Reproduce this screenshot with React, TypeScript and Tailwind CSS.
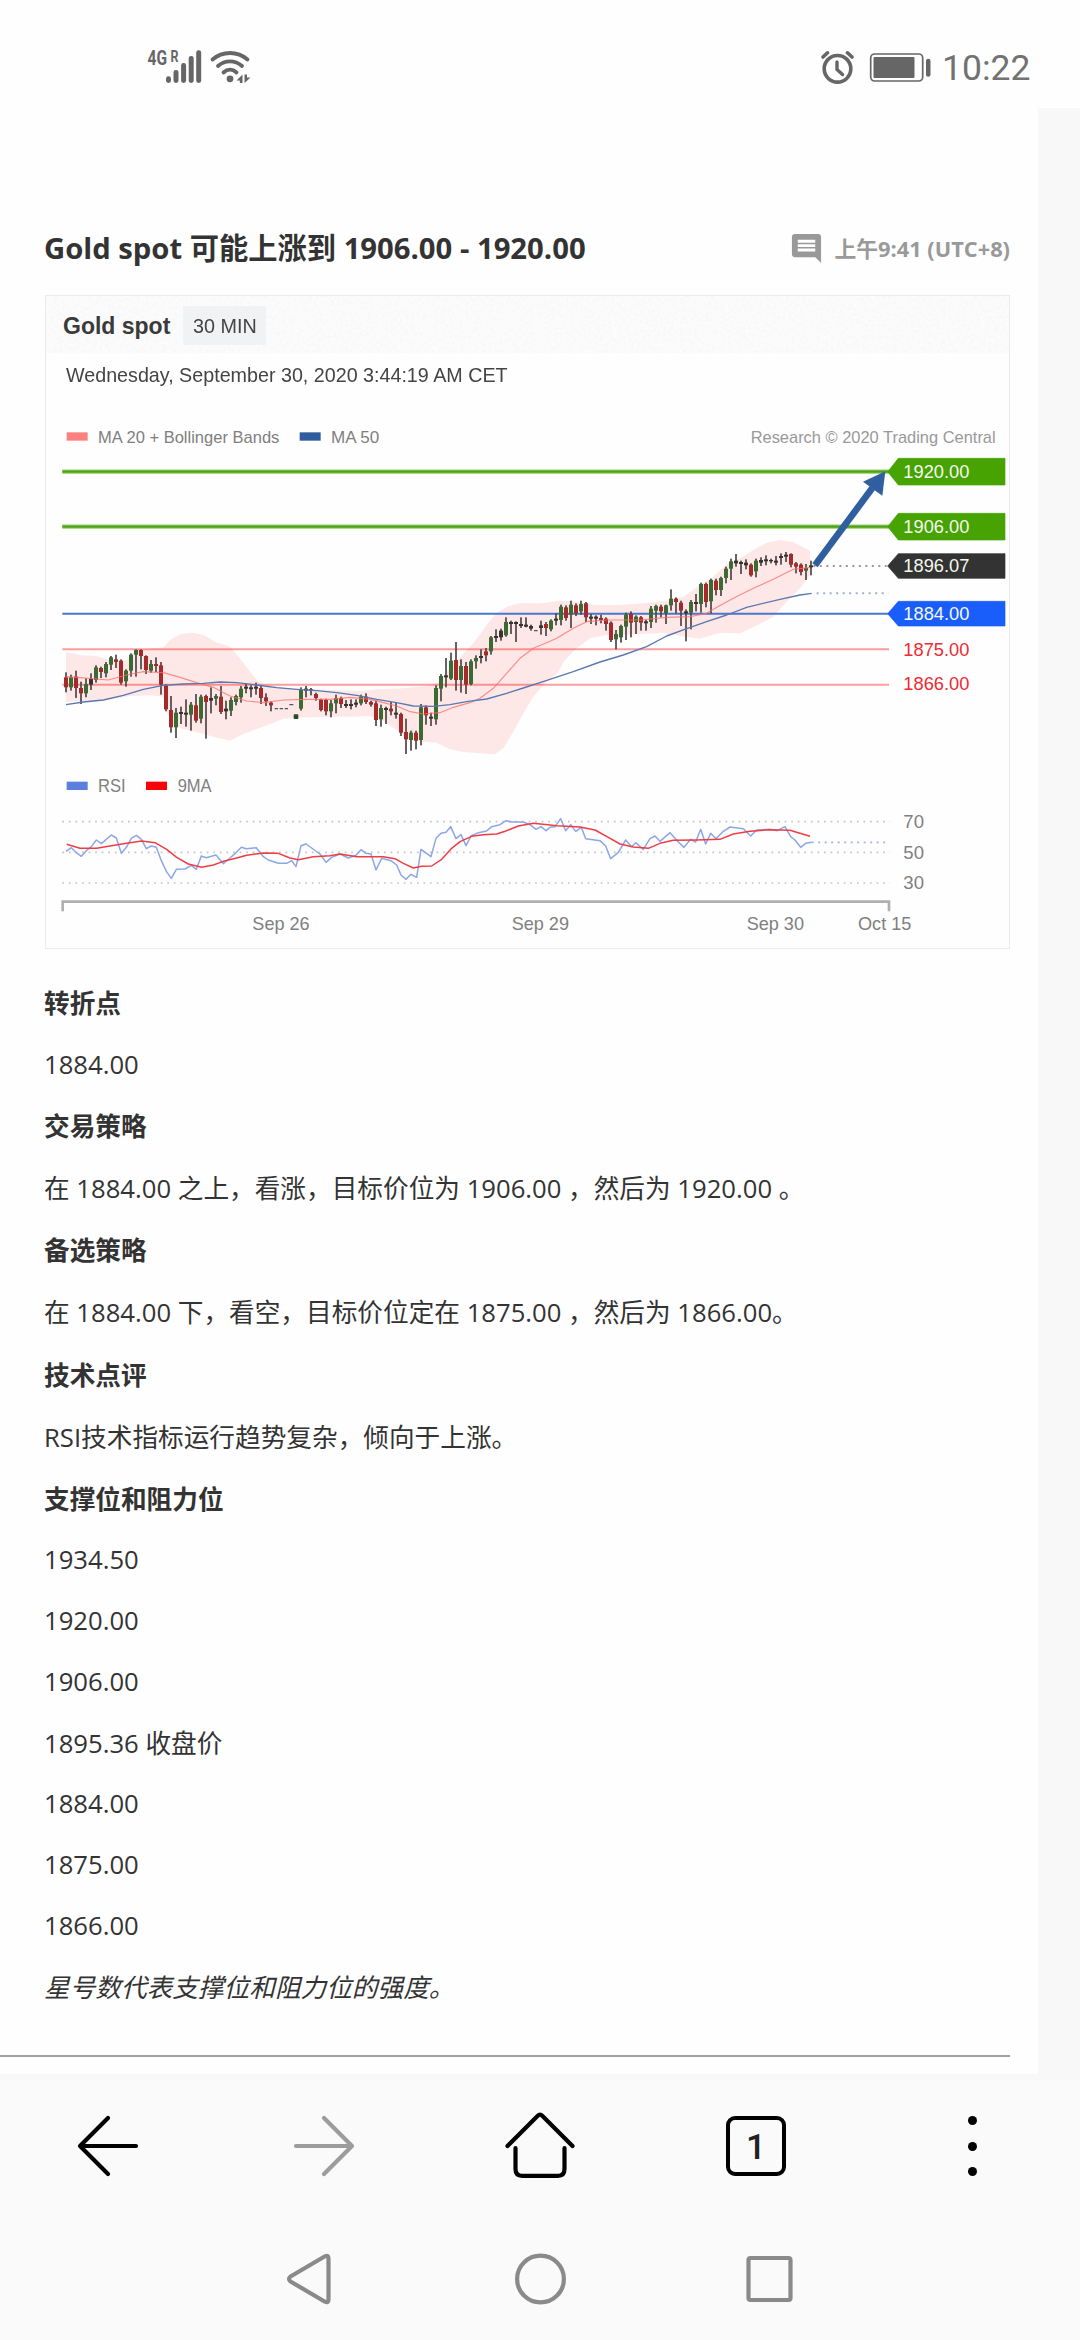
import { MdComment } from "react-icons/md"

type Candle = [high: number, top: number, bottom: number, low: number, color: "g" | "r" | "k"]

// Chart space: 3 units per pixel, candles are 15 units apart
const CANDLE_START = 108
const CANDLE_STEP = 15

const candles: (Candle | null)[] = [
  [217, 232, 262, 277, "r"], [224, 232, 262, 272, "g"], [212, 230, 264, 294, "r"], [245, 264, 280, 312, "r"],
  [235, 252, 280, 292, "g"], [220, 236, 254, 270, "k"], [196, 202, 240, 248, "g"], [200, 204, 216, 234, "r"],
  [186, 192, 220, 232, "g"], [168, 172, 194, 210, "g"], [164, 178, 186, 204, "r"], [178, 182, 248, 254, "r"],
  [208, 212, 244, 260, "g"], [160, 164, 212, 230, "g"], [148, 150, 164, 230, "g"], [148, 150, 168, 208, "r"],
  [166, 168, 210, 222, "r"], [180, 192, 212, 218, "g"], [172, 192, 198, 216, "r"], [186, 196, 254, 284, "r"],
  [252, 256, 328, 334, "r"], [288, 330, 382, 398, "r"], [324, 338, 382, 414, "g"], [320, 336, 342, 372, "k"],
  [298, 338, 344, 380, "k"], [306, 314, 344, 392, "g"], [282, 316, 362, 368, "r"], [284, 290, 356, 370, "g"],
  [284, 288, 306, 416, "r"], [262, 294, 302, 340, "k"], [282, 288, 296, 316, "g"], [258, 290, 336, 342, "r"],
  [302, 326, 334, 358, "k"], [292, 300, 332, 348, "g"], [284, 288, 306, 316, "g"], [258, 266, 292, 308, "g"],
  [250, 260, 266, 280, "k"], [256, 262, 268, 292, "k"], [248, 260, 266, 284, "k"], [258, 264, 294, 312, "r"],
  [280, 292, 304, 318, "r"], [304, 308, 316, 334, "r"], null, null,
  null, null, null, [262, 270, 326, 332, "g"],
  [258, 266, 272, 292, "k"], [264, 268, 272, 286, "k"], [278, 282, 294, 302, "r"], [296, 298, 330, 334, "r"],
  [296, 300, 334, 346, "r"], [300, 310, 334, 352, "g"], [284, 294, 310, 340, "g"], [290, 294, 312, 324, "r"],
  [300, 312, 318, 324, "k"], [298, 312, 318, 328, "k"], [298, 308, 314, 322, "k"], [284, 290, 310, 316, "g"],
  [280, 290, 306, 312, "r"], [302, 306, 314, 320, "r"], [302, 310, 360, 378, "r"], [314, 324, 358, 380, "g"],
  [320, 324, 330, 372, "k"], [306, 326, 334, 346, "r"], [308, 338, 344, 356, "k"], [338, 342, 398, 408, "r"],
  [356, 396, 418, 462, "r"], [392, 398, 420, 452, "g"], [392, 398, 422, 448, "r"], [312, 322, 420, 436, "g"],
  [316, 322, 346, 374, "r"], [338, 350, 356, 378, "k"], [256, 264, 358, 374, "g"], [222, 228, 266, 304, "g"],
  [174, 226, 232, 262, "k"], [158, 182, 236, 240, "g"], [126, 180, 240, 272, "r"], [178, 198, 240, 278, "g"],
  [186, 198, 254, 282, "r"], [178, 184, 252, 256, "g"], [166, 174, 184, 206, "g"], [148, 168, 174, 190, "k"],
  [144, 154, 166, 184, "r"], [108, 112, 154, 164, "g"], [88, 108, 114, 126, "k"], [86, 92, 112, 122, "k"],
  [52, 66, 106, 110, "g"], [62, 66, 72, 102, "k"], [64, 66, 72, 126, "k"], [52, 72, 78, 84, "k"],
  [52, 74, 80, 82, "k"], [74, 78, 86, 92, "k"], null, [62, 76, 84, 104, "k"],
  [66, 72, 84, 108, "r"], [58, 62, 88, 94, "g"], [40, 56, 62, 76, "k"], [14, 20, 60, 76, "g"],
  [16, 22, 54, 62, "r"], [2, 14, 44, 84, "g"], [10, 16, 40, 48, "r"], [2, 12, 34, 44, "g"],
  [6, 10, 52, 66, "r"], [42, 50, 56, 72, "k"], [46, 50, 56, 76, "k"], [44, 54, 60, 70, "r"],
  [52, 56, 72, 92, "r"], [64, 68, 120, 126, "r"], [90, 102, 118, 148, "g"], [74, 78, 112, 128, "g"],
  [38, 44, 80, 120, "g"], [34, 42, 68, 112, "r"], [46, 50, 66, 102, "g"], [48, 52, 68, 92, "r"],
  [60, 64, 70, 92, "k"], [18, 26, 66, 84, "g"], [14, 18, 32, 68, "g"], [14, 20, 34, 52, "r"],
  [14, 16, 40, 72, "g"], [-32, -4, 16, 32, "g"], [-8, -4, 6, 40, "r"], [2, 8, 32, 78, "r"],
  [28, 34, 40, 124, "k"], [0, 6, 38, 88, "g"], [-18, 6, 12, 34, "k"], [-52, -48, 12, 38, "g"],
  [-52, -48, 6, 22, "r"], [-64, -60, 4, 40, "g"], [-64, -58, -30, -14, "r"], [-70, -66, -30, -12, "g"],
  [-100, -94, -66, -50, "g"], [-124, -116, -94, -60, "g"], [-138, -118, -110, -100, "k"], [-118, -114, -108, -78, "k"],
  [-122, -112, -104, -92, "k"], [-110, -106, -74, -70, "r"], [-124, -118, -86, -68, "g"], [-128, -120, -112, -102, "k"],
  [-134, -122, -116, -104, "k"], [-124, -120, -116, -110, "k"], [-132, -118, -112, -104, "k"], [-140, -132, -126, -106, "k"],
  [-144, -136, -130, -114, "k"], [-140, -138, -106, -98, "r"], [-114, -110, -100, -80, "r"], [-110, -106, -84, -74, "r"],
  [-108, -96, -88, -60, "g"], [-118, -104, -98, -74, "k"],
]

const candleColors = { g: "#3c6a33", r: "#a52a2a", k: "#3a3230" }

const bandUpper =
  "108,156 150,165 200,168 230,178 260,188 290,180 320,150 400,142 420,120 450,103 485,98 520,104 555,125 600,140 630,175 660,215 690,250 730,258 800,268 850,268 900,270 950,272 1000,272 1040,268 1100,266 1150,262 1190,258 1230,245 1260,200 1290,172 1330,130 1370,75 1400,40 1430,20 1470,10 1530,10 1590,2 1640,5 1690,15 1770,15 1860,8 1910,2 1960,-10 2010,-45 2050,-70 2090,-108 2130,-125 2170,-150 2210,-172 2250,-180 2290,-174 2340,-148"
const bandLower =
  "2340,-75 2310,-35 2270,5 2230,50 2190,72 2130,100 2070,98 2010,116 1950,108 1900,98 1830,102 1730,105 1680,115 1640,145 1605,180 1580,222 1545,250 1510,290 1480,340 1450,395 1420,445 1395,463 1350,460 1300,456 1260,448 1220,428 1180,425 1140,420 1100,390 1060,362 1020,348 960,350 900,350 830,352 760,356 700,380 640,402 600,422 550,410 500,396 460,388 430,375 410,335 400,290 360,286 300,288 220,302 150,304 108,306"
const ma20 =
  "108,230 150,233 235,240 290,225 340,215 400,218 450,232 500,248 550,262 600,288 650,303 700,308 760,300 830,298 900,298 960,292 1020,298 1060,308 1100,318 1140,335 1180,342 1230,338 1270,322 1320,308 1350,295 1390,265 1430,220 1470,175 1510,145 1560,124 1580,115 1630,85 1670,65 1730,60 1830,60 1910,52 1980,50 2030,40 2050,28 2110,-5 2170,-35 2230,-62 2290,-92 2340,-98"
const ma50 =
  "108,314 160,306 220,300 280,286 340,268 400,256 460,252 520,250 570,246 620,248 680,255 740,263 800,268 860,272 920,278 980,286 1040,298 1100,308 1150,318 1210,319 1260,314 1310,305 1370,297 1430,280 1480,264 1530,248 1630,215 1710,186 1780,165 1850,140 1910,108 1970,86 2030,65 2090,45 2150,22 2250,-2 2310,-15 2345,-20"
const rsi =
  "108,754 124,743 139,758 154,769 169,752 184,740 199,720 214,731 244,705 259,714 274,760 289,742 304,715 319,706 334,718 349,746 364,738 379,742 394,782 409,814 424,835 439,808 465,807 484,796 499,808 514,768 529,773 558,765 580,791 600,774 619,757 634,742 649,746 679,743 700,770 715,780 745,790 770,790 785,782 798,800 813,737 828,732 845,744 870,762 888,787 905,772 930,762 955,774 978,766 993,749 1008,760 1023,762 1038,810 1055,775 1083,782 1100,795 1113,825 1128,838 1143,823 1160,832 1173,748 1203,770 1218,715 1233,700 1248,697 1262,680 1278,716 1293,704 1308,737 1323,708 1345,698 1370,693 1385,680 1410,674 1428,662 1445,666 1480,666 1500,674 1518,688 1533,680 1548,692 1560,682 1575,680 1592,656 1607,692 1622,674 1637,694 1654,682 1667,716 1710,722 1727,738 1742,776 1765,757 1787,720 1805,740 1817,728 1840,748 1860,716 1875,708 1890,724 1920,698 1945,726 1962,742 1982,718 1997,726 2012,688 2027,732 2042,700 2058,716 2080,694 2100,681 2140,686 2162,708 2180,690 2220,688 2242,692 2265,680 2282,710 2295,720 2312,742 2327,730 2345,727"
const rsiMa =
  "110,733 150,745 200,745 240,738 290,730 335,723 375,728 410,748 440,772 475,792 515,802 550,795 580,784 620,774 650,766 700,759 745,760 780,774 805,779 850,770 900,767 930,762 980,770 1060,770 1095,776 1120,790 1150,804 1175,799 1205,798 1235,778 1265,745 1290,725 1325,709 1360,704 1400,702 1430,692 1465,678 1510,670 1560,675 1580,677 1650,681 1695,690 1735,712 1770,732 1810,741 1855,745 1890,730 1930,721 2000,720 2070,718 2110,702 2160,694 2220,689 2280,691 2310,700 2340,709"

const levels = [
  { y: -385, label: "1920.00", tag: "#46a302", half: 40 },
  { y: -220, label: "1906.00", tag: "#46a302", half: 40 },
  { y: -102, label: "1896.07", tag: "#333333", half: 37 },
  { y: 41, label: "1884.00", tag: "#195dfa", half: 37 },
]

const dates = [
  { x: 667, w: 172, label: "Sep 26" },
  { x: 1445, w: 172, label: "Sep 29" },
  { x: 2150, w: 172, label: "Sep 30" },
  { x: 2484, w: 160, label: "Oct 15" },
]

const notes = [
  { text: "转折点", kind: "heading" },
  { text: "1884.00", kind: "number" },
  { text: "交易策略", kind: "heading" },
  { text: "在 1884.00 之上，看涨，目标价位为 1906.00 ，然后为 1920.00 。", kind: "text" },
  { text: "备选策略", kind: "heading" },
  { text: "在 1884.00 下，看空，目标价位定在 1875.00 ，然后为 1866.00。", kind: "text" },
  { text: "技术点评", kind: "heading" },
  { text: "RSI技术指标运行趋势复杂，倾向于上涨。", kind: "text" },
  { text: "支撑位和阻力位", kind: "heading" },
  { text: "1934.50", kind: "number" },
  { text: "1920.00", kind: "number" },
  { text: "1906.00", kind: "number" },
  { text: "1895.36 收盘价", kind: "text" },
  { text: "1884.00", kind: "number" },
  { text: "1875.00", kind: "number" },
  { text: "1866.00", kind: "number" },
  { text: "星号数代表支撑位和阻力位的强度。", kind: "italic" },
]

// Lines with Chinese text are slightly taller than plain number lines
const noteStyles: Record<string, string> = {
  heading: "pt-[1.6px] font-bold",
  text: "pt-[1.6px]",
  number: "",
  italic: "pt-[1.6px] italic",
}

type LabelProps = { x: number; y: number; w: number; size?: number; fill?: string; children: string }

function Label({ x, y, w, size = 57, fill = "#808080", children }: LabelProps) {
  return (
    <text x={x} y={y} fontSize={size} fill={fill} textLength={w} lengthAdjust="spacingAndGlyphs">
      {children}
    </text>
  )
}

function StatusBar() {
  return (
    <header className="flex h-[108px] items-center justify-between bg-[#fefefe] pt-[25px] pl-[140px] pr-[50px]">
      <svg className="h-[48px] w-[120px]" viewBox="140 42 120 48" fill="#666">
        <g fontFamily="Roboto, sans-serif" fontWeight="700">
          <text x="147.500" y="64" fontSize="20" textLength="19.500" lengthAdjust="spacingAndGlyphs">4G</text>
          <text x="170.500" y="61" fontSize="17" textLength="8" lengthAdjust="spacingAndGlyphs">R</text>
        </g>
        <rect x="166" y="75.300" width="5" height="6.700" rx="2.400" />
        <rect x="173.500" y="69" width="5" height="13" rx="2.400" />
        <rect x="181.100" y="62" width="5" height="20" rx="2.400" />
        <rect x="188.700" y="55" width="5" height="27" rx="2.400" />
        <rect x="196.200" y="49.300" width="5" height="32.700" rx="2.400" />
        <g fill="none" stroke="#666" strokeWidth="3.800" strokeLinecap="round">
          <path d="M212.500 58.500C222.500 49.800 237.500 49.800 247.500 58.500" />
          <path d="M218 65C225 58.800 235 58.800 242 65" />
          <path d="M223.500 71.500C227.500 67.800 232.500 67.800 236.500 71.500" />
        </g>
        <circle cx="230" cy="77.800" r="3.400" />
        <path d="M242.500 73.500V82H239.800V79.500H236.500ZM244.500 82V73.500H247V76.500H250.500Z" />
      </svg>
      <div className="flex items-center gap-[13px]">
        <svg className="h-[48px] w-[112px]" viewBox="820 42 112 48" fill="none" stroke="#666" strokeLinecap="round">
          <circle cx="836.500" cy="67.800" r="13.300" strokeWidth="3.600" />
          <path d="M822 56L826.500 51.800M851 56L846.500 51.800" strokeWidth="3.600" />
          <path d="M836 61V68.500L841.500 73.500" strokeWidth="3.400" strokeLinejoin="round" />
          <rect x="869.700" y="53" width="52" height="27" rx="4" strokeWidth="1.700" />
          <rect x="872.500" y="56" width="41" height="21" rx="1" fill="#666" stroke="none" />
          <rect x="925" y="57.700" width="4.500" height="18" rx="2.200" fill="#666" stroke="none" />
        </svg>
        <span className="-ml-[4px] w-[88px] pt-[2px] whitespace-nowrap font-['Roboto'] text-[35.5px] leading-[48px] text-[#727272]">
          10:22
        </span>
      </div>
    </header>
  )
}

function PriceChart() {
  return (
    <svg className="block h-[547px] w-[963px] font-['Liberation_Sans',sans-serif]" viewBox="48 -600 2889 1641">
      {/* legend */}
      <rect x="110" y="-503" width="63" height="25" fill="#fb8080" />
      <Label x={204} y={-472} w={544} size={51}>MA 20 + Bollinger Bands</Label>
      <rect x="809" y="-503" width="63" height="25" fill="#2f5d9e" />
      <Label x={903} y={-472} w={145} size={51}>MA 50</Label>
      <Label x={2162} y={-472} w={735} size={51} fill="#999">Research © 2020 Trading Central</Label>

      {/* bollinger bands */}
      <polygon points={`${bandUpper} ${bandLower}`} fill="#ff0000" fillOpacity="0.09" />

      {/* target, pivot and support lines */}
      <g stroke="#8fd45f" strokeWidth="13">
        <path d="M97 -385H2577M97 -220H2577" />
        <path d="M97 -385H2577M97 -220H2577" stroke="#52a022" strokeWidth="7" />
      </g>
      <path d="M97 148H2577M97 254H2577" stroke="#ff0000" strokeOpacity="0.38" strokeWidth="6" />
      <path d="M97 41H2577" stroke="#4a76cc" strokeWidth="6" />

      {/* candles */}
      {candles.map((c, i) => {
        if (!c) return null
        const x = CANDLE_START + i * CANDLE_STEP
        const [high, top, bottom, low, color] = c
        return (
          <g key={i}>
            <rect x={x - 2.5} y={high} width="5" height={low - high} fill="#4a4544" />
            <rect x={x - 6} y={top} width="12" height={bottom - top} fill={candleColors[color]} />
          </g>
        )
      })}
      <path d="M734 326H744M749 326H759M764 326H774M778 314H790M1512 92H1523" stroke="#555" strokeWidth="4" />
      <rect x="791" y="343" width="14" height="14" rx="2" fill="#2e4a2c" />

      <g fill="none" strokeWidth="3.500" strokeLinejoin="round">
        <polyline points={ma20} stroke="#ff6b6b" strokeOpacity="0.75" />
        <polyline points={ma50} stroke="#5a78b0" strokeWidth="4" />
      </g>
      <path d="M2350 -102H2570" stroke="#777" strokeWidth="5" strokeDasharray="6 13.500" />
      <path d="M2360 -20H2575" stroke="#9fb0cc" strokeWidth="6" strokeDasharray="6 13.500" />

      {/* forecast arrow */}
      <path d="M2355 -104L2527 -336" stroke="#2f5f9f" strokeWidth="20" />
      <polygon points="2566,-386 2499,-355 2557,-313" fill="#2f5f9f" />

      {/* price tags */}
      {levels.map(({ y, label, tag, half }) => (
        <g key={label}>
          <polygon
            points={`2573,${y} 2605,${y - half} 2925,${y - half} 2925,${y + half} 2605,${y + half}`}
            fill={tag}
            stroke={tag}
            strokeWidth="2"
            strokeLinejoin="round"
          />
          <Label x={2620} y={y + 19} w={198} fill="#f4f8ee">{label}</Label>
        </g>
      ))}
      <Label x={2620} y={168} w={198} fill="#ee2a33">1875.00</Label>
      <Label x={2620} y={271} w={198} fill="#ee2a33">1866.00</Label>

      {/* RSI */}
      <rect x="110" y="545" width="63" height="25" fill="#5b7fdd" />
      <Label x={204} y={575} w={83} size={53}>RSI</Label>
      <rect x="348" y="545" width="63" height="25" fill="#fb0007" />
      <Label x={443} y={575} w={102} size={53}>9MA</Label>
      <path d="M97 665H2580M97 757H2580M97 849H2580" stroke="#c4c4c4" strokeWidth="5" strokeDasharray="5 14.700" />
      <path d="M2345 727H2575" stroke="#a9b2dd" strokeWidth="5" strokeDasharray="6 13.500" />
      <g fill="none" strokeLinejoin="round">
        <polyline points={rsi} stroke="#8ba7e6" strokeWidth="4.500" />
        <polyline points={rsiMa} stroke="#ee3d45" strokeWidth="4.500" />
      </g>
      <Label x={2620} y={684} w={62}>70</Label>
      <Label x={2620} y={777} w={62}>50</Label>
      <Label x={2620} y={866} w={62}>30</Label>

      {/* time axis */}
      <path d="M98 934V905H2577V934" fill="none" stroke="#b0b0b0" strokeWidth="8" />
      {dates.map(({ x, w, label }) => (
        <Label key={label} x={x} y={990} w={w}>{label}</Label>
      ))}
    </svg>
  )
}

function ChartCard() {
  return (
    <section className="h-[654px] w-[965px] border border-[#ebebeb] bg-[#fefefe] font-['Liberation_Sans',sans-serif]">
      <div className="relative flex h-[57px] items-center bg-[#fcfcfc] pt-[2px] pl-[17px]">
        <svg className="absolute inset-0 h-full w-full">
          <filter id="grain">
            <feTurbulence type="fractalNoise" baseFrequency="0.35" numOctaves="2" seed="4" />
            <feColorMatrix values="0 0 0 0 0.6  0 0 0 0 0.6  0 0 0 0 0.6  0.5 0 0 0 -0.17" />
          </filter>
          <rect width="100%" height="100%" filter="url(#grain)" opacity="0.4" />
        </svg>
        <span className="relative w-[120px] pt-[1px] text-[23px] font-bold text-[#3a3a3a]">Gold spot</span>
        <span className="relative flex h-[39px] w-[83px] items-center justify-center bg-[#f1f2f4] text-[#444]">
          <span className="scale-x-[.94] text-[21px]">30 MIN</span>
        </span>
      </div>
      <p className="h-[47px] origin-left scale-x-[.952] pl-[21px] text-[20.7px] leading-[43px] text-[#444]">
        Wednesday, September 30, 2020 3:44:19 AM CET
      </p>
      <PriceChart />
    </section>
  )
}

function BrowserBar() {
  return (
    <nav className="grid h-[126px] grid-cols-5 place-items-center pt-[6px]">
      <svg className="size-[66px]" viewBox="75 2113 66 66" fill="none" stroke="#000" strokeWidth="4.200" strokeLinecap="round" strokeLinejoin="round">
        <path d="M136 2146H80M108 2118L80 2146L108 2174" />
      </svg>
      <svg className="size-[66px]" viewBox="291 2113 66 66" fill="none" stroke="#9c9c9c" strokeWidth="4.200" strokeLinecap="round" strokeLinejoin="round">
        <path d="M296 2146H352M324 2118L352 2146L324 2174" />
      </svg>
      <svg className="size-[72px]" viewBox="504 2110 72 72" fill="none" stroke="#000" strokeWidth="4.200" strokeLinecap="round">
        <path d="M507.500 2146L537.500 2116Q540 2113.500 542.500 2116L572.500 2146" />
        <path d="M515.500 2148V2169Q515.500 2175.800 522 2175.800H558Q564.500 2175.800 564.500 2169V2148" />
      </svg>
      <div className="flex size-[60px] items-center justify-center rounded-[9px] border-4 border-black pt-[3px] font-['Roboto'] text-[35px] font-medium leading-none text-[#222]">
        1
      </div>
      <div className="flex h-[60px] flex-col items-center justify-between">
        <span className="size-[9px] rounded-full bg-black" />
        <span className="size-[9px] rounded-full bg-black" />
        <span className="size-[9px] rounded-full bg-black" />
      </div>
    </nav>
  )
}

function SystemBar() {
  return (
    <nav className="flex flex-1 items-center justify-center pt-[12px]">
      <svg className="h-[56px] w-[231px]" viewBox="193.500 2251 231 56" fill="none" stroke="#8a8a8a" strokeWidth="4.200" strokeLinejoin="round">
        <path d="M290 2276.500Q287 2279 290 2281.500L324.500 2301.700Q328 2303.500 328 2299.500V2258.500Q328 2254.500 324.500 2256.300Z" />
      </svg>
      <svg className="h-[56px] w-[231px]" viewBox="424.500 2251 231 56" fill="none" stroke="#8a8a8a" strokeWidth="4.200">
        <circle cx="540" cy="2279" r="23.400" />
      </svg>
      <svg className="h-[56px] w-[231px]" viewBox="655.500 2251 231 56" fill="none" stroke="#8a8a8a" strokeWidth="4.200">
        <rect x="748" y="2258" width="42" height="42" rx="2" />
      </svg>
    </nav>
  )
}

export default function App() {
  return (
    <div className="flex h-[2340px] w-[1080px] flex-col overflow-hidden bg-[#fafafa] font-['Open_Sans','Noto_Sans_CJK_SC',sans-serif] text-[#333]">
      <StatusBar />
      <div className="h-[1972px] bg-[#f8f8f8]">
        <main className="h-[1966px] w-[1038px] bg-[#fefefe]">
          <div className="flex h-[187px] items-end justify-between pl-[44px] pr-[28px]">
            <h1 className="pb-[27px] text-[29.26px] font-bold leading-[39px] whitespace-nowrap">
              Gold spot 可能上涨到 1906.00 - 1920.00
            </h1>
            <div className="flex items-center gap-[10px] pb-[27px] text-[#999]">
              <MdComment className="size-[35px]" />
              <span className="text-[21.8px] font-bold leading-[39px] whitespace-nowrap">上午9:41 (UTC+8)</span>
            </div>
          </div>
          <div className="pl-[45px]">
            <ChartCard />
          </div>
          <article className="flex flex-col gap-[25.6px] pt-[35.4px] pl-[44px] text-[25.67px] leading-[35px]">
            {notes.map((note, i) => (
              <p key={i} className={noteStyles[note.kind]}>
                {note.text}
              </p>
            ))}
          </article>
          <hr className="mt-[50px] w-[1010px] border-t-2 border-[#a0a0a0]" />
        </main>
      </div>
      <BrowserBar />
      <SystemBar />
    </div>
  )
}
